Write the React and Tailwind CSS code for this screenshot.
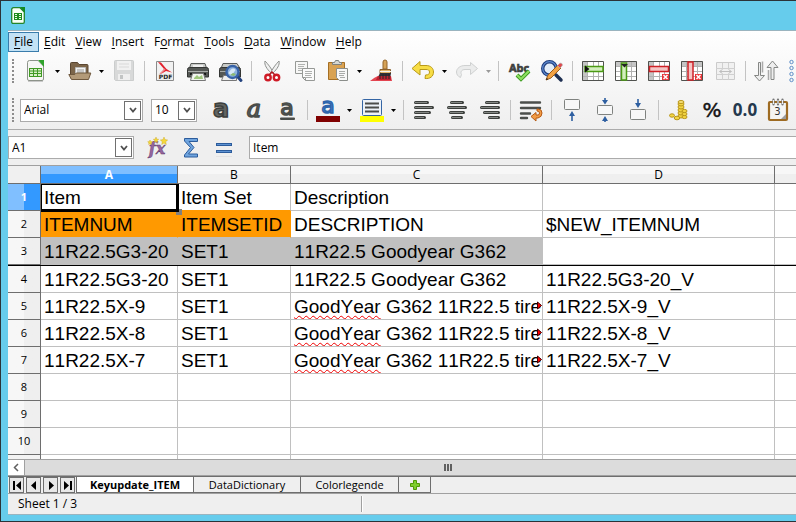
import React from 'react';

const Svg = ({ children, w = 24, h = 24 }) => (
  <svg width={w} height={h} viewBox={`0 0 ${w} ${h}`} fill="none" aria-hidden="true" className="block shrink-0 overflow-visible">
    {children}
  </svg>
);

const CalcDoc = () => (
  <>
    <path d="M3.500 3.500a2 2 0 0 1 2-2H14L19.500 7v13a1.500 1.500 0 0 1-1.500 1.500H5A1.500 1.500 0 0 1 3.500 20z" fill="#f6f7f4" stroke="#8d938a" />
    <path d="M14 1h6v7z" fill="#2fa32b" />
    <path d="M5 9h13v9H5z" fill="#3f9a22" />
    <path d="M6 10h3v1.500H6zm4 0h3v1.500h-3zm4 0h3v1.500h-3zM6 12.500h3V14H6zm4 0h3V14h-3zm4 0h3V14h-3zM6 15h3v2H6zm4 0h3v2h-3zm4 0h3v2h-3z" fill="#d8f0c8" />
    <path d="M4 22.500h15" stroke="#c9c9c9" />
  </>
);

const AppLogo = () => (
  <svg width="14" height="17" viewBox="0 0 14 17" fill="none" aria-hidden="true" className="block">
    <path d="M.7 2.500A1.800 1.800 0 0 1 2.500.7H9l4.300 4.300v10a1.300 1.300 0 0 1-1.300 1.300H2A1.300 1.300 0 0 1 .7 15z" fill="#f8fff4" stroke="#23852a" strokeWidth="1.300" />
    <path d="M9 0h5v6z" fill="#128a25" />
    <path d="M3 6h8v7H3z" fill="#1e8a1c" />
    <path d="M4 7h2v1H4zm4 0h2v1H8zM4 9h2v1H4zm4 0h2v1H8zM4 11h2v1H4zm4 0h2v1H8z" fill="#e8ffe0" />
  </svg>
);

const icons = {
  'New': <CalcDoc />,
  'Open': (
    <>
      <path d="M2.500 19V4.500a1 1 0 0 1 1-1h6l1.500 2h8a1 1 0 0 1 1 1V19z" fill="#7c6549" stroke="#5a4631" />
      <path d="M7.500 8.500h10v8h-10z" fill="#f4f4f2" stroke="#bbb" />
      <path d="M9 11h7M9 13h7" stroke="#999" />
      <path d="M.8 15.500h6l1.500-1.500h14.500l-2.300 6.500H3.500z" fill="#b39a78" stroke="#6f583d" />
    </>
  ),
  'Save': (
    <>
      <path d="M2.500 2.500a1 1 0 0 1 1-1h17a1 1 0 0 1 1 1v19h-18l-1-1z" fill="#d8d9d9" stroke="#cbcdcd" />
      <path d="M5 2h14v9H5z" fill="#f1f1f1" />
      <path d="M7 5h10M7 8h10" stroke="#d9d9d9" />
      <path d="M6 15h12v6H6z" fill="#efefef" />
      <path d="M8 16h3v4H8z" fill="#c2c4c4" />
    </>
  ),
  'Export as PDF': (
    <>
      <path d="M3.500 2.500h17v19h-17z" fill="#f1f1f1" stroke="#8a8a8a" />
      <path d="M5 3l3 .5 5.500 6.500 5.500 3.500-6-1.500-5 3 3-5z" fill="#e2202c" />
      <path d="M12 10l-5 5" stroke="#ef8a8e" strokeWidth="1.500" />
      <path d="M5 15h15v6H5z" fill="#ececec" />
      <text x="12.500" y="20" fontSize="6" fontWeight="700" textAnchor="middle" fill="#222" fontFamily="DejaVu Sans, sans-serif">PDF</text>
    </>
  ),
  'Print': (
    <>
      <path d="M5 4.500h14l2 6H3z" fill="#c9cbc8" stroke="#575957" />
      <path d="M7 6h10v3H7z" fill="#efefef" />
      <path d="M1.500 10.500a2 2 0 0 1 2-2h17a2 2 0 0 1 2 2V18h-21z" fill="#555855" stroke="#343634" />
      <path d="M2 12h20v1H2z" fill="#a9aca9" />
      <path d="M4 14h16v2H4z" fill="#151715" />
      <path d="M6.500 14.500h11l2 7h-15z" fill="#f1f5ee" stroke="#777" />
      <path d="M8 19l3-3 2 2 3-2 1 4H8z" fill="#9fc77c" />
    </>
  ),
  'Page Preview': (
    <>
      <path d="M4 4.500h14l3 5H2z" fill="#c9cbc8" stroke="#575957" />
      <path d="M.5 10.500a2 2 0 0 1 2-2h17a2 2 0 0 1 2 2V18h-21z" fill="#555855" stroke="#343634" />
      <path d="M1 12h20v1H1z" fill="#a9aca9" />
      <path d="M4.500 16.500h13v5h-15z" fill="#eee" stroke="#777" />
      <path d="M18 17l4 4.500" stroke="#23427e" strokeWidth="3" strokeLinecap="round" />
      <circle cx="13.500" cy="13" r="6" fill="#8eb3de" stroke="#3863a8" strokeWidth="2.400" />
      <path d="M9.500 14q4-7 7-3l-2 3-3 2z" fill="#d7e7f6" />
      <path d="M11 16l3-2 3 1-2 2z" fill="#8dbb70" />
    </>
  ),
  'Cut': (
    <>
      <path d="M5 2c-1 4 2 8 6 12l2-1C11 9 8 5 5 2z" fill="#f1f1f1" stroke="#8e918e" />
      <path d="M19 2c1 4-2 8-6 12l-2-1c2-4 5-8 8-11z" fill="#f1f1f1" stroke="#8e918e" />
      <circle cx="8" cy="18.500" r="2.700" fill="#fff" stroke="#cf1b26" strokeWidth="2.400" />
      <circle cx="16.500" cy="18.500" r="2.700" fill="#fff" stroke="#cf1b26" strokeWidth="2.400" />
      <path d="M9 16l3-3 3 3" stroke="#b31922" strokeWidth="1.500" />
    </>
  ),
  'Copy': (
    <>
      <path d="M2.500 2.500h12v12h-12z" fill="#f7f7f6" stroke="#969996" />
      <path d="M5 5.500h7M5 7.500h6M5 9.500h7M5 11.500h4" stroke="#b1b3b1" />
      <path d="M9.500 9.500h12v12h-9l-3-3z" fill="#fbfbfb" stroke="#969996" />
      <path d="M12 12.500h7M12 14.500h7M12 16.500h6M13 18.500h6" stroke="#aeb0ae" />
      <path d="M9.500 18.500h3v3" stroke="#969996" />
    </>
  ),
  'Paste': (
    <>
      <path d="M2.500 3.500h16v17h-16z" fill="#d9a252" stroke="#a56f24" />
      <path d="M6.500 5.500v-2h2l1-2h3l1 2h2v2z" fill="#d5d7d3" stroke="#7f827f" />
      <path d="M10.500 9.500h11v12h-8l-3-3z" fill="#f8f8f8" stroke="#8b8e8b" />
      <path d="M13 12.500h6M13 14.500h6M13 16.500h5M14 18.500h5" stroke="#a9aba9" />
    </>
  ),
  'Clone Formatting': (
    <>
      <path d="M0 22q5-4 8-5h13l1 5z" fill="#e34450" />
      <path d="M13 3q0-2 2-2t2 2v7h-4z" fill="#d5a256" stroke="#93642a" />
      <path d="M10 10.500h10.500v4H10z" fill="#e4b66a" stroke="#8b6331" />
      <path d="M10 12.500h11" stroke="#f5f5ef" />
      <path d="M10 14h11l-1 6q-5 1-12-2z" fill="#302f36" />
      <path d="M8 17l13 0v4H6z" fill="#bd2230" />
      <path d="M10 16v4M13 15v5M16 15v5M19 15v5" stroke="#27262b" />
    </>
  ),
  'Undo': (
    <path d="M1 8.500L9 1.500v4h6c5 0 7.500 3 7.500 6.500 0 4.500-3.500 7-8.500 6.500l.5-3.500c3 0 4-1 4-3s-1.500-2.500-3.500-2.500H9v5.500z" transform="translate(0 1)" fill="#f7dd45" stroke="#b99a19" strokeLinejoin="round" />
  ),
  'Redo': (
    <path d="M22.500 8.500l-7-6v3H10c-5 0-8.500 3-8.500 6.500 0 2.500 1.500 4.500 4 5.500l1-3c-1.500-3 .5-5 3.500-5h5.500v5z" transform="translate(0 1)" fill="#ebecec" stroke="#cfd1d1" strokeLinejoin="round" />
  ),
  'Spelling': (
    <>
      <text x="12" y="13" fontSize="11" fontWeight="700" textAnchor="middle" fill="#444746" stroke="#333" strokeWidth=".6" fontFamily="Open Sans, sans-serif">Abc</text>
      <path d="M10 16l4 4 8-8" stroke="#3d9a20" strokeWidth="4" />
      <path d="M10 16l4 4 8-8" stroke="#8fe062" strokeWidth="2" />
    </>
  ),
  'Find and Replace': (
    <>
      <path d="M16 16l5 5" stroke="#1e2f52" strokeWidth="3.500" strokeLinecap="round" />
      <circle cx="9.500" cy="9.500" r="6.800" fill="#e3edf8" stroke="#1f3d7c" strokeWidth="3.400" />
      <circle cx="9.500" cy="9.500" r="6.800" stroke="#5f8bd0" strokeWidth="1.200" />
      <path d="M6 21l2-5L18 6l3 3-10 10z" fill="#f2a244" stroke="#9b5c1b" />
      <path d="M17.500 6.500l2-2q1.500-1 2.500.2t0 2.300l-2 2z" fill="#e0484d" stroke="#b9b9b9" strokeWidth=".7" />
      <path d="M6 21l.8-2 1.500 1.200z" fill="#222" />
    </>
  ),
};

const GridBase = ({ children, left, top }) => (
  <>
    <path d="M1 2h22v20H1z" fill="#fff" />
    {top && <path d="M1 2h22v5H1z" fill="#c5c5c5" />}
    {left && <path d="M1 2h6v20H1z" fill="#c5c5c5" />}
    <path d="M1 7.500h22M1 12.500h22M1 17.500h22M6.500 2v20M12.500 2v20M17.500 2v20" stroke="#b1b1b1" />
    <path d="M1.500 2.500h21v19h-21z" stroke="#50524f" />
    {children}
  </>
);
const RedX = () => (
  <>
    <path d="M15 15h7v6h-7z" fill="#e83438" />
    <path d="M16.500 16l4 4M20.500 16l-4 4" stroke="#fff" strokeWidth="1.500" />
  </>
);

Object.assign(icons, {
  'Insert Row': <GridBase left><path d="M4 7.500h18v5H4z" fill="#d3efbd" stroke="#4b9a14" strokeWidth="1.500" /><path d="M4 6.500l4.500 3.500L4 13.500z" fill="#111" /></GridBase>,
  'Insert Column': <GridBase top><path d="M7.500 4h5v17h-5z" fill="#d3efbd" stroke="#4b9a14" strokeWidth="1.500" /><path d="M7 5h7l-3.500 3.500z" fill="#222" /></GridBase>,
  'Delete Row': <GridBase left><path d="M2.500 7.500h19v5h-19z" fill="#f5c4c4" stroke="#cf2127" strokeWidth="1.500" /><RedX /></GridBase>,
  'Delete Column': <GridBase top><path d="M8 3h5v18H8z" fill="#f5c4c4" stroke="#cf2127" strokeWidth="1.500" /><RedX /></GridBase>,
  'Merge Cells': (
    <>
      <path d="M3.500 3.500h18v17h-18z" fill="#f1f1f1" stroke="#cbcbcb" />
      <path d="M3 9.500h19M3 15.500h19M9.500 4v5M15.500 4v5M9.500 16v5M15.500 16v5" stroke="#d0d0d0" />
      <path d="M7 12.500h11M9.500 10.500l-3 2 3 2M15.500 10.500l3 2-3 2" stroke="#bfbfbf" />
    </>
  ),
  'Sort': (
    <>
      <path d="M4.500 3.500h2v13h4L5.500 22l-5-5.500h4z" fill="#eee" stroke="#858785" />
      <path d="M17 20.500h3v-12h4L18.500 2 13 8.500h4z" fill="#eee" stroke="#858785" />
      <path d="M8.500 2.500v11" stroke="#aaa" strokeWidth="1.500" />
      <path d="M14.500 11v10" stroke="#aaa" strokeWidth="1.500" />
    </>
  ),
});

const Lines = ({ rows }) => rows.map(([x, w], i) => (
  <g key={i}>
    <rect x={x} y={3 + i * 5} width={w} height="3" rx="1.500" fill="#3c3f3c" />
    <rect x={x + 1} y={4 + i * 5} width={w - 3} height="1" fill="#858885" />
  </g>
));

const glyph = { fontSize: 25, fontWeight: 700, textAnchor: 'middle', fontFamily: 'DejaVu Sans, sans-serif' };

Object.assign(icons, {
  'Bold': <text {...glyph} x="12" y="19" fontSize="24" fill="#626562" stroke="#3c3f3c" strokeWidth="1.500">a</text>,
  'Italic': <text {...glyph} x="12" y="19" fontSize="24" fontStyle="italic" fontWeight="400" fontFamily="DejaVu Serif, serif" fill="#626562" stroke="#4a4d4a" strokeWidth="1.500">a</text>,
  'Underline': (
    <>
      <text {...glyph} x="12" y="17" fontSize="22" fontWeight="400" fill="#626562" stroke="#4a4d4a" strokeWidth="1.500">a</text>
      <rect x="5" y="19.500" width="15" height="2.500" rx="1" fill="#4a4d4a" />
    </>
  ),
  'Font Color': (
    <>
      <text {...glyph} x="12" y="15" fontSize="22" fontWeight="400" fill="#5c93d6" stroke="#2f64ab" strokeWidth="1.500">a</text>
      <path d="M0 18h24v6H0z" fill="#800000" />
    </>
  ),
  'Background Color': (
    <>
      <rect x="2.500" y="1.500" width="19" height="16" rx="1" fill="#edf2f8" stroke="#3465a4" />
      <path d="M5 5.500h14M5 9.500h14M5 13.500h14" stroke="#4b4d4b" strokeWidth="2" />
      <path d="M0 18h24v6H0z" fill="#ff0" />
    </>
  ),
  'Align Left': <Lines rows={[[2, 15], [2, 20], [2, 17], [2, 12]]} />,
  'Align Center': <Lines rows={[[5, 14], [2, 20], [4, 16], [6, 12]]} />,
  'Align Right': <Lines rows={[[7, 15], [2, 20], [5, 17], [10, 12]]} />,
  'Wrap Text': (
    <>
      <path d="M2 4.500h19M2 10h19M2 15.500h9M2 20h6" stroke="#4b4e4b" strokeWidth="2.400" strokeLinecap="round" />
      <path d="M18 11h1q4 0 4 4t-4 5h-2v3l-5-4.500 5-4v2.500h2q1.500 0 1.500-2T18 13z" fill="#f29b45" stroke="#b65a13" />
    </>
  ),
  'Align Top': (
    <>
      <rect x="4.500" y="1.500" width="15" height="10" rx="1" fill="#f7f7f7" stroke="#7f827f" />
      <path d="M12 23v-7" stroke="#2e5fa1" strokeWidth="1.600" />
      <path d="M12 13l3 5H9z" fill="#2e5fa1" />
    </>
  ),
  'Center Vertically': (
    <>
      <rect x="4.500" y="7.500" width="15" height="9" rx="1" fill="#f7f7f7" stroke="#7f827f" />
      <path d="M12 0v3M12 21v3" stroke="#2e5fa1" strokeWidth="1.600" />
      <path d="M12 6.500L9 2h6zM12 18l3 5H9z" fill="#2e5fa1" />
    </>
  ),
  'Align Bottom': (
    <>
      <rect x="4.500" y="11.500" width="15" height="10" rx="1" fill="#f7f7f7" stroke="#7f827f" />
      <path d="M12 1v5" stroke="#2e5fa1" strokeWidth="1.600" />
      <path d="M12 10L9 5h6z" fill="#2e5fa1" />
    </>
  ),
  'Format as Currency': (
    <>
      {[18, 15, 12, 9, 6].map((y) => <ellipse key={y} cx="14" cy={y} rx="3" ry="2" fill="#f3d543" stroke="#b8951a" />)}
      <ellipse cx="14" cy="4" rx="3" ry="1.500" fill="#f8e27a" stroke="#b8951a" />
      {[19, 16, 13].map((y) => <ellipse key={y} cx="17.500" cy={y} rx="2.500" ry="1.600" fill="#f3d543" stroke="#b8951a" />)}
      <ellipse cx="5" cy="17.500" rx="2.500" ry="1.700" fill="#f3d543" stroke="#b8951a" />
      <ellipse cx="10" cy="20" rx="2.800" ry="1.800" fill="#f3d543" stroke="#b8951a" />
    </>
  ),
  'Format as Percent': <text x="12" y="19" fontSize="20" fontWeight="500" textAnchor="middle" fill="#151515" stroke="#151515" strokeWidth=".5" fontFamily="DejaVu Sans, sans-serif">%</text>,
  'Format as Number': <text x="12" y="18" fontSize="17" fontWeight="700" textAnchor="middle" fill="#24384d" fontFamily="Open Sans, sans-serif">0.0</text>,
  'Format as Date': (
    <>
      <rect x="3" y="4" width="18" height="18" rx="1" fill="#f4f4f2" stroke="#9e6b22" strokeWidth="2.200" />
      <path d="M15 21l5-5v5z" fill="#9b9b9b" />
      <path d="M7.500 1.500v5M12 1.500v5M16.500 1.500v5" stroke="#777" strokeWidth="2.200" strokeLinecap="round" />
      <path d="M7.500 2v4M12 2v4M16.500 2v4" stroke="#f1f1f1" />
      <text x="11.500" y="17" fontSize="10" textAnchor="middle" fill="#333" fontFamily="DejaVu Sans, sans-serif">3</text>
    </>
  ),
  'Function Wizard': (
    <>
      <text x="11" y="18" fontSize="16" fontStyle="italic" fontWeight="700" textAnchor="middle" fill="#94659f" stroke="#5c3566" strokeWidth=".4" fontFamily="DejaVu Serif, serif">fx</text>
      <path d="M18 1l1 2.600 2.700.4-2 1.700.6 2.800L18 7l-2.300 1.500.6-2.800-2-1.700 2.700-.4zM10 1l.7 2 2 .3-1.500 1.200.4 2L10 5.400l-1.600 1 .4-2L7.300 3.300l2-.3zM4 4l.7 1.500 1.600.3-1.200 1.100.3 1.600L4 7.700l-1.400.8.3-1.600-1.200-1.100 1.600-.3z" fill="#f5d83a" stroke="#c8a41b" strokeWidth=".4" />
    </>
  ),
  'Sum': <path d="M5.500 2.500h13v3h-8.500l5 6-5.500 6.500h9v3h-13v-2l6-7.500-6-6.500z" fill="#6fa4de" stroke="#2c5c9c" strokeLinejoin="round" />,
  'Function': (
    <>
      <rect x="4.500" y="7.500" width="15" height="2" fill="#5d92d2" stroke="#2c5c9c" />
      <rect x="4.500" y="14.500" width="15" height="2" fill="#5d92d2" stroke="#2c5c9c" />
      <path d="M4 20.500h16" stroke="#e3e3e3" />
    </>
  ),
});

const IconButton = ({ name }) => (
  <button type="button" aria-label={name} className="flex h-8 w-[33px] shrink-0 items-center justify-center">
    <Svg>{icons[name]}</Svg>
  </button>
);
const MenuArrow = ({ label, muted }) => (
  <button type="button" aria-label={`${label} options`} className="flex h-8 w-[11px] shrink-0 items-center justify-center">
    <Svg w={5} h={3}><path d="M0 0h5L2.500 3z" fill={muted ? '#999' : '#000'} /></Svg>
  </button>
);
const Separator = () => <span className="flex h-5 w-2 shrink-0 justify-center"><span className="w-px bg-[#c3c3c3]" /></span>;
const Grip = () => <span className="ml-1 h-6 w-0 shrink-0 border-l-2 border-dotted border-[#8c8c8c]" />;

const Tools = ({ items }) => items.map((item, i) => {
  if (item === '|') return <Separator key={i} />;
  if (item === 'v' || item === 'V') return <MenuArrow key={i} label={items[i - 1]} muted={item === 'V'} />;
  return <IconButton key={i} name={item} />;
});

const standard = ['New', 'v', 'Open', 'v', 'Save', '|', 'Export as PDF', 'Print', 'Page Preview', '|', 'Cut', 'Copy', 'Paste', 'v', 'Clone Formatting', '|', 'Undo', 'v', 'Redo', 'V', '|', 'Spelling', 'Find and Replace', '|', 'Insert Row', 'Insert Column', 'Delete Row', 'Delete Column', 'Merge Cells', '|', 'Sort'];
const formatting = ['Bold', 'Italic', 'Underline', '|', 'Font Color', 'v', 'Background Color', 'v', '|', 'Align Left', 'Align Center', 'Align Right', '|', 'Wrap Text', '|', 'Align Top', 'Center Vertically', 'Align Bottom', '|', 'Format as Currency', 'Format as Percent', 'Format as Number', 'Format as Date'];

const Combo = ({ label, value, width }) => (
  <div className={`relative h-[23px] shrink-0 ${width}`}>
    <select aria-label={label} defaultValue={value} className="block h-full w-full appearance-none border border-[#ababab] bg-white pl-[3px] text-xs text-black">
      <option>{value}</option>
    </select>
    <span className="pointer-events-none absolute top-0.5 right-0.5 flex h-[19px] w-[17px] items-center justify-center border border-[#707070] bg-white">
      <Svg w={8} h={6}><path d="M1 1l3 3.500L7 1" stroke="#505050" strokeWidth="1.800" /></Svg>
    </span>
  </div>
);

const columns = ['A', 'B', 'C', 'D', ''];
const rows = [
  ['Item', 'Item Set', 'Description', ''],
  ['ITEMNUM', 'ITEMSETID', 'DESCRIPTION', '$NEW_ITEMNUM'],
  ['11R22.5G3-20', 'SET1', '11R22.5 Goodyear G362', ''],
  ['11R22.5G3-20', 'SET1', '11R22.5 Goodyear G362', '11R22.5G3-20_V'],
  ['11R22.5X-9', 'SET1', 'GoodYear G362 11R22.5 tire', '11R22.5X-9_V'],
  ['11R22.5X-8', 'SET1', 'GoodYear G362 11R22.5 tire', '11R22.5X-8_V'],
  ['11R22.5X-7', 'SET1', 'GoodYear G362 11R22.5 tire', '11R22.5X-7_V'],
  [], [], [],
];

const cellColor = (r, c) => {
  if (r === 0 && c < 2) return 'border-r-[#c0c0c0] border-b-[#ff9900]';
  if (r === 1 && c < 2) return 'bg-[#ff9900] border-r-[#ff9900] border-b-[#c0c0c0]';
  if (r === 2 && c < 3) return 'bg-[#c0c0c0] border-[#c0c0c0]';
  return 'border-[#c0c0c0]';
};

const Misspelled = ({ text, wavy }) => {
  if (!wavy) return text;
  const [first, ...rest] = text.split(' ');
  return (
    <>
      <span className="underline decoration-[#f00000] decoration-wavy decoration-1 underline-offset-2 [text-decoration-skip-ink:none]">{first}</span>
      {` ${rest.join(' ')}`}
    </>
  );
};

const Cell = ({ r, c, text = '' }) => (
  <td className={`relative border-b p-0 ${c < 4 ? 'border-r' : ''} ${cellColor(r, c)}`}>
    <div className="h-[26px] overflow-hidden pl-[3px] leading-[27px] whitespace-nowrap">
      <Misspelled text={text} wavy={c === 2 && r > 3} />
    </div>
    {c === 2 && r > 3 && r < 7 && (
      <svg className="absolute top-2 right-0" width="5" height="9" viewBox="0 0 5 9" aria-hidden="true">
        <path d="M.5 1v7L4.500 4.500z" fill="#f00" stroke="#400" />
      </svg>
    )}
    {r === 0 && c === 0 && (
      <>
        <span className="absolute top-[25px] left-[135px] z-10 h-1.5 w-1.5 bg-[#808080]" />
        <span className="absolute top-0 left-0 z-20 h-7 w-[138px] border-t border-r-3 border-b-3 border-l border-black" />
      </>
    )}
  </td>
);

const Sheet = () => (
  <table className="w-full table-fixed border-separate border-spacing-0 bg-white font-['Liberation_Sans',Arial,sans-serif] text-[19px] text-black [font-kerning:none]">
    <colgroup>
      <col className="w-[33px]" /><col className="w-[137px]" /><col className="w-[113px]" /><col className="w-[252px]" /><col className="w-[232px]" /><col />
    </colgroup>
    <thead className="font-['Open_Sans',sans-serif] text-xs">
      <tr>
        <th aria-label="Select all" className="border-r border-b border-[#6e6e6e] bg-[#f0f0f0] p-0" />
        {columns.map((name, i) => (
          <th
            key={i}
            scope="col"
            className={`h-[18px] border-b border-[#6e6e6e] p-0 leading-4 ${i < 4 ? 'border-r' : ''} ${i === 0 ? 'bg-linear-to-b from-[#80bfff] from-50% to-[#3399ff] to-50% font-bold text-white' : 'bg-linear-to-b from-[#f7f7f7] from-50% to-[#efefef] to-50% font-normal'}`}
          >
            {name}
          </th>
        ))}
      </tr>
    </thead>
    <tbody>
      {rows.map((row, r) => (
        <React.Fragment key={r}>
          <tr>
            <th
              scope="row"
              className={`h-[27px] border-r border-b border-[#6e6e6e] p-0 font-['Open_Sans',sans-serif] text-[11px] ${r === 0 ? 'bg-linear-to-r from-[#80bfff] from-50% to-[#3399ff] to-50% font-bold text-white' : 'bg-linear-to-r from-[#f7f7f7] from-50% to-[#efefef] to-50% font-normal'}`}
            >
              {r + 1}
            </th>
            {[0, 1, 2, 3, 4].map((c) => <Cell key={c} r={r} c={c} text={row[c]} />)}
          </tr>
          {r === 2 && <tr><td colSpan={6} className="h-px bg-black p-0" /></tr>}
        </React.Fragment>
      ))}
      <tr>
        <td className="h-1 border-r border-[#6e6e6e] bg-[#f3f3f3] p-0" />
        {columns.map((_, i) => <td key={i} className={`border-[#c0c0c0] p-0 ${i < 4 ? 'border-r' : ''}`} />)}
      </tr>
    </tbody>
  </table>
);

const navIcons = [
  ['First sheet', 'M1 0h2v9H1zM9 0v9L4 4.500z'],
  ['Previous sheet', 'M7 0v9L2 4.500z'],
  ['Next sheet', 'M3 0v9l5-4.500z'],
  ['Last sheet', 'M1 0v9l5-4.500zM7 0h2v9H7z'],
];

export default function App() {
  return (
    <div className="overflow-hidden border-t border-b border-l border-[#2b3338] bg-[#66ccec] pb-1.5 pl-[7px] font-['Open_Sans',sans-serif] text-xs text-black">
      <header className="flex h-[29px] items-center pl-[3px]"><AppLogo /></header>
      <main className="border-t border-b border-[#9ab4bf] bg-[#efefef]">
        <div className="border-b border-[#ababab] bg-linear-to-b from-white to-[#efefef]">
          <nav aria-label="Menu" className="flex h-[22px] items-center">
            {['File', 'Edit', 'View', 'Insert', 'Format', 'Tools', 'Data', 'Window', 'Help'].map((m) => {
              const k = m === 'Format' ? 1 : 0;
              return (
                <button key={m} type="button" className={`h-5 border leading-4 ${m === 'File' ? 'border-[#3a7cab] bg-[#c3e2f5] px-[5px]' : 'border-transparent px-1'}`}>
                  {m.slice(0, k)}<span className="underline underline-offset-2">{m[k]}</span>{m.slice(k + 1)}
                </button>
              );
            })}
          </nav>
          <div role="toolbar" aria-label="Standard" className="flex h-9 items-center">
            <Grip />
            <span className="w-[5px] shrink-0" />
            <Tools items={standard} />
            <svg width="5" height="24" viewBox="0 0 5 24" className="ml-[7px] shrink-0" fill="none" aria-hidden="true">
              {[3, 9, 15, 21].map((y) => <circle key={y} cx="2.500" cy={y} r="1.700" stroke="#5b8cc6" />)}
            </svg>
          </div>
          <div role="toolbar" aria-label="Formatting" className="flex h-10 items-center pt-0.5">
            <Grip />
            <span className="w-1.5 shrink-0" />
            <Combo label="Font name" value="Arial" width="w-[123px]" />
            <span className="w-2 shrink-0" />
            <Combo label="Font size" value="10" width="w-[46px]" />
            <span className="w-[7px] shrink-0" />
            <Tools items={formatting} />
          </div>
        </div>
        <div role="toolbar" aria-label="Formula" className="flex h-9 items-center border-b border-[#a0a0a0]">
          <Combo label="Cell reference" value="A1" width="w-[126px]" />
          <span className="w-[7px] shrink-0" />
          <IconButton name="Function Wizard" />
          <IconButton name="Sum" />
          <IconButton name="Function" />
          <input aria-label="Input line" defaultValue="Item" className="ml-[9px] h-[23px] min-w-0 flex-1 border border-r-0 border-[#ababab] bg-white px-[3px] text-xs outline-none" />
        </div>
        <Sheet />
        <div className="flex h-[17px] border-t border-b border-[#a0a0a0] bg-[#dcdcdc]">
          <button type="button" aria-label="Scroll left" className="flex w-[17px] items-center justify-center border-r border-[#a0a0a0] bg-white">
            <Svg w={6} h={9}><path d="M5 1L1.500 4.500 5 8" stroke="#606060" strokeWidth="1.500" /></Svg>
          </button>
          <div className="flex flex-1 items-center justify-center gap-px pl-[74px]">
            {[0, 1, 2].map((i) => <span key={i} className="h-[7px] w-0.5 bg-[#606060]" />)}
          </div>
        </div>
        <div className="flex h-[18px] items-stretch border-t border-b border-t-[#6e6e6e] border-b-[#a0a0a0] text-[11px]">
          <div className="flex gap-0.5 px-px">
            {navIcons.map(([label, d]) => (
              <button key={label} type="button" aria-label={label} className="flex h-4 w-[15px] items-center justify-center border border-[#6e6e6e] bg-[#e8e8e8]">
                <Svg w={10} h={9}><path d={d} fill="#000" /></Svg>
              </button>
            ))}
          </div>
          <button type="button" className="w-[118px] border-r border-b border-l border-[#6e6e6e] bg-white leading-[14px] font-bold">Keyupdate_ITEM</button>
          <button type="button" className="w-[107px] border-r border-b border-[#6e6e6e] leading-[14px]">DataDictionary</button>
          <button type="button" className="w-[98px] border-r border-b border-[#6e6e6e] leading-[14px]">Colorlegende</button>
          <button type="button" aria-label="Add sheet" className="flex w-8 items-center justify-center border-r border-b border-[#6e6e6e]">
            <Svg w={12} h={12}><path d="M4.500 1.500h3v3h3v3h-3v3h-3v-3h-3v-3h3z" fill="#7fce2e" stroke="#4e9a06" strokeLinejoin="round" /></Svg>
          </button>
        </div>
        <footer className="flex h-5 items-center">
          <span className="w-[353px] pl-2.5">Sheet 1 / 3</span>
          <span className="h-4 w-0.5 border-r border-l border-r-white border-l-[#a0a0a0]" />
        </footer>
      </main>
    </div>
  );
}
